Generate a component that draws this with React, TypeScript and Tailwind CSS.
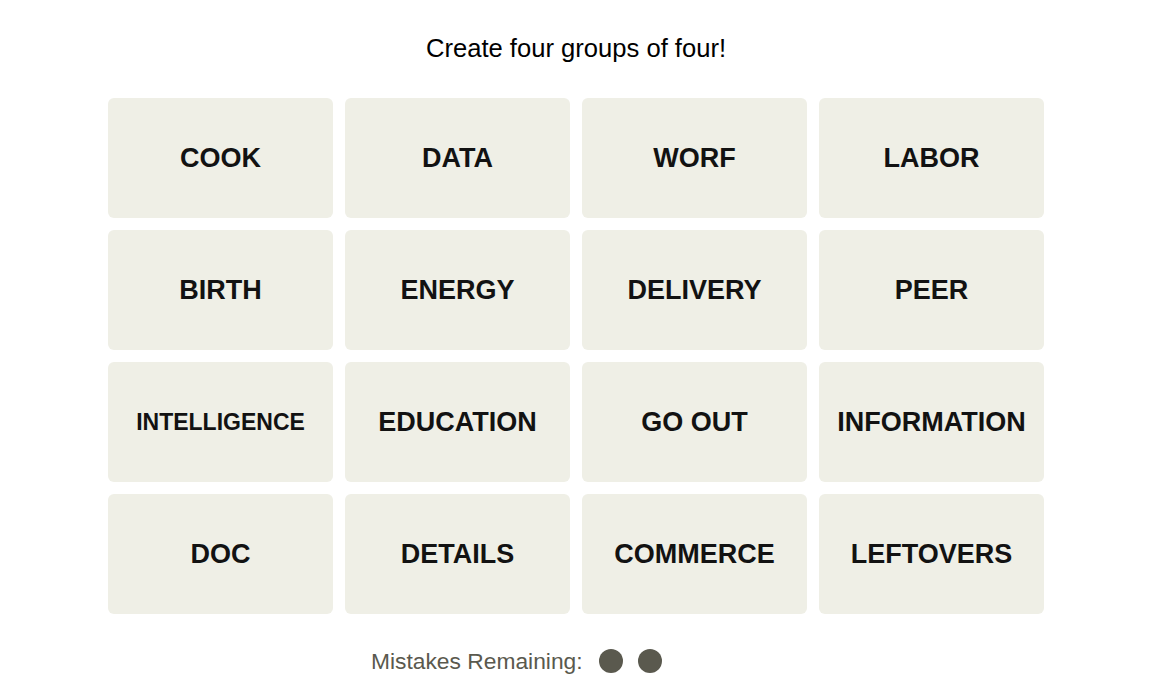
const words = [
  'COOK', 'DATA', 'WORF', 'LABOR',
  'BIRTH', 'ENERGY', 'DELIVERY', 'PEER',
  'INTELLIGENCE', 'EDUCATION', 'GO OUT', 'INFORMATION',
  'DOC', 'DETAILS', 'COMMERCE', 'LEFTOVERS',
];

const App = () => {
  return (
    <div className="min-h-screen bg-white font-['Liberation_Sans',Arial,sans-serif]">
      <div className="ml-[108px] w-[936px] pt-[33px]">
        <h1 className="text-center text-[25.6px] leading-[30px] font-normal text-black">
          Create four groups of four!
        </h1>

        <div className="mt-[35px] grid grid-cols-4 gap-3">
          {words.map((word) => (
            <div
              key={word}
              className="flex h-[120px] items-center justify-center rounded-md bg-[#efefe6]"
            >
              <span
                className={
                  word.length > 11
                    ? 'text-[23px] font-bold text-[#121212]'
                    : 'text-[27px] font-bold text-[#121212]'
                }
              >
                {word}
              </span>
            </div>
          ))}
        </div>

        <div className="mt-[32px] flex h-[30px] items-center pl-[263px]">
          <span className="text-[22.8px] text-[#5a594e]">Mistakes Remaining:</span>
          <div className="ml-[16px] flex gap-[15px]">
            <span className="h-6 w-6 rounded-full bg-[#5a594e]" />
            <span className="h-6 w-6 rounded-full bg-[#5a594e]" />
          </div>
        </div>
      </div>
    </div>
  );
};

export default App;
